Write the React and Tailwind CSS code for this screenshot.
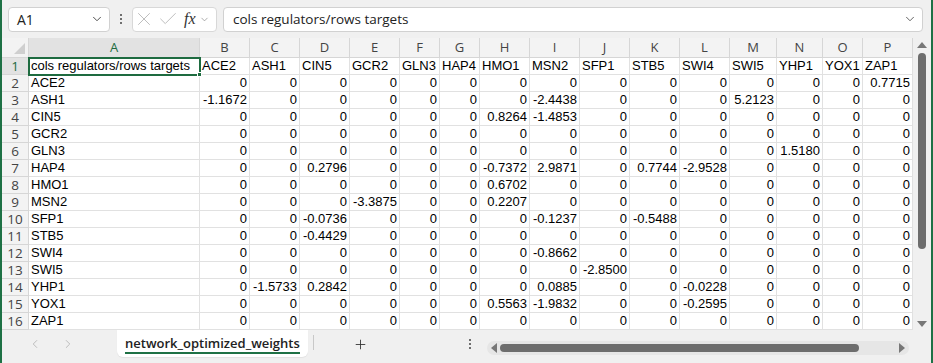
import { ChevronDown, ChevronLeft, ChevronRight, X, Check, Plus } from 'lucide-react'

const cols = [
  { l: 'A', w: 171 },
  { l: 'B', w: 50 },
  { l: 'C', w: 50 },
  { l: 'D', w: 50 },
  { l: 'E', w: 50 },
  { l: 'F', w: 40 },
  { l: 'G', w: 40 },
  { l: 'H', w: 50 },
  { l: 'I', w: 50 },
  { l: 'J', w: 50 },
  { l: 'K', w: 50 },
  { l: 'L', w: 50 },
  { l: 'M', w: 47 },
  { l: 'N', w: 46 },
  { l: 'O', w: 40 },
  { l: 'P', w: 50 },
]

const genes = ['ACE2', 'ASH1', 'CIN5', 'GCR2', 'GLN3', 'HAP4', 'HMO1', 'MSN2', 'SFP1', 'STB5', 'SWI4', 'SWI5', 'YHP1', 'YOX1', 'ZAP1']

// non-zero weights, keyed by row gene then column letter
const weights = {
  ACE2: { P: '0.7715' },
  ASH1: { B: '-1.1672', I: '-2.4438', M: '5.2123' },
  CIN5: { H: '0.8264', I: '-1.4853' },
  GLN3: { N: '1.5180' },
  HAP4: { D: '0.2796', H: '-0.7372', I: '2.9871', K: '0.7744', L: '-2.9528' },
  HMO1: { H: '0.6702' },
  MSN2: { E: '-3.3875', H: '0.2207' },
  SFP1: { D: '-0.0736', I: '-0.1237', K: '-0.5488' },
  STB5: { D: '-0.4429' },
  SWI4: { I: '-0.8662' },
  SWI5: { J: '-2.8500' },
  YHP1: { C: '-1.5733', D: '0.2842', I: '0.0885', L: '-0.0228' },
  YOX1: { H: '0.5563', I: '-1.9832', L: '-0.2595' },
}

const ui = { fontFamily: '"Open Sans", "Noto Sans", sans-serif' }
const cell = { fontFamily: '"Liberation Sans", Arial, sans-serif' }

function Toolbar() {
  return (
    <div className="flex items-center h-[38px] pl-[6px] pr-[8px] gap-[6px]" style={ui}>
      <div className="flex items-center justify-between w-[102px] h-[25px] bg-white border border-[#d1d1d1] rounded-[4px] pl-[8px] pr-[5px] text-[14px] text-[#222]">
        <span>A1</span>
        <ChevronDown size={14} strokeWidth={1.6} className="text-[#444]" />
      </div>
      <div className="flex flex-col gap-[2px] px-[4px]">
        <span className="w-[2px] h-[2px] bg-[#444] rounded-full" />
        <span className="w-[2px] h-[2px] bg-[#444] rounded-full" />
        <span className="w-[2px] h-[2px] bg-[#444] rounded-full" />
      </div>
      <div className="flex items-center w-[85px] h-[25px] bg-white border border-[#d8d8d8] rounded-[4px] text-[#b8b8b8]">
        <X size={22} strokeWidth={1} />
        <Check size={22} strokeWidth={1} className="ml-[2px]" />
        <span className="ml-[5px] text-[#333] italic text-[16px] leading-none" style={{ fontFamily: '"Liberation Serif", serif' }}>fx</span>
        <ChevronDown size={11} strokeWidth={1.5} className="text-[#888] ml-[3px]" />
      </div>
      <div className="flex-1 flex items-center justify-between h-[25px] bg-white border border-[#d1d1d1] rounded-[4px] pl-[9px] pr-[5px] text-[13.5px] text-[#222]">
        <span>cols regulators/rows targets</span>
        <ChevronDown size={14} strokeWidth={1.4} className="text-[#444]" />
      </div>
    </div>
  )
}

function HeaderRow() {
  return (
    <div className="flex h-[20px] bg-[#f3f3f3] text-[13px] text-[#444]" style={ui}>
      <div className="relative w-[27px] shrink-0 border-r border-b border-[#d6d6d6]">
        <div className="absolute right-[3px] bottom-[3px] w-0 h-0 border-l-[11px] border-l-transparent border-b-[11px] border-b-[#cfcfcf]" />
      </div>
      {cols.map((c) => (
        <div
          key={c.l}
          className={`shrink-0 flex items-center justify-center border-r border-b border-[#d6d6d6] ${c.l === 'A' ? 'bg-[#e2e2e2] text-[#1e6b40]' : ''}`}
          style={{ width: c.w }}
        >
          {c.l}
        </div>
      ))}
    </div>
  )
}

function Row({ n, children, selected }) {
  return (
    <div className="flex h-[17px]">
      <div
        className={`w-[27px] shrink-0 flex items-center justify-center border-r border-b border-[#d6d6d6] text-[13.5px] ${selected ? 'bg-[#e2e2e2] text-[#1e6b40]' : 'bg-[#f3f3f3] text-[#444]'}`}
        style={ui}
      >
        {n}
      </div>
      {children}
    </div>
  )
}

function Grid() {
  return (
    <div className="flex-1 bg-white overflow-hidden">
      <HeaderRow />
      <Row n={1} selected>
        {cols.map((c, i) => (
          <div
            key={c.l}
            className={`relative shrink-0 flex items-center px-[2px] border-r border-b border-[#e1e1e1] text-[13px] text-black whitespace-nowrap ${i === 0 ? 'outline-2 outline-[#1e6b40] -outline-offset-1 z-10' : ''}`}
            style={{ width: c.w, ...cell }}
          >
            {i === 0 ? 'cols regulators/rows targets' : genes[i - 1]}
            {i === 0 && <span className="absolute -right-[3px] -bottom-[3px] w-[5px] h-[5px] bg-[#1e6b40] border border-white" />}
          </div>
        ))}
      </Row>
      {genes.map((g, r) => (
        <Row key={g} n={r + 2}>
          {cols.map((c, i) => (
            <div
              key={c.l}
              className={`shrink-0 flex items-center px-[2px] border-r border-b border-[#e1e1e1] text-[13px] text-black whitespace-nowrap ${i === 0 ? 'justify-start' : 'justify-end'}`}
              style={{ width: c.w, ...cell }}
            >
              {i === 0 ? g : (weights[g] && weights[g][c.l]) || '0'}
            </div>
          ))}
        </Row>
      ))}
    </div>
  )
}

function VScroll() {
  return (
    <div className="w-[18px] shrink-0 flex flex-col items-center bg-[#f0f0f0] pt-[4px] pb-[3px]">
      <div className="w-0 h-0 border-l-[5px] border-l-transparent border-r-[5px] border-r-transparent border-b-[6px] border-b-[#777]" />
      <div className="w-[8px] h-[196px] mt-[5px] bg-[#6d6d6d] rounded-full" />
      <div className="flex-1" />
      <div className="w-0 h-0 border-l-[5px] border-l-transparent border-r-[5px] border-r-transparent border-t-[6px] border-t-[#777]" />
    </div>
  )
}

function SheetBar() {
  return (
    <div className="flex items-start h-[33px] bg-[#f0f0f0]" style={ui}>
      <div className="flex items-center gap-[19px] pl-[26px] h-[28px] text-[#b5b5b5]">
        <ChevronLeft size={14} strokeWidth={1.5} />
        <ChevronRight size={14} strokeWidth={1.5} />
      </div>
      <div className="ml-[42px] h-[27px] px-[8px] bg-white rounded-b-[6px] flex flex-col items-center justify-center shadow-[0_1px_1px_rgba(0,0,0,0.06)]">
        <span className="text-[13px] font-semibold text-[#222] leading-[18px] border-b-2 border-[#1e7145]">network_optimized_weights</span>
      </div>
      <div className="ml-[5px] mt-[5px] w-px h-[15px] bg-[#c8c8c8]" />
      <div className="ml-[39px] h-[28px] flex items-center text-[#333]">
        <Plus size={15} strokeWidth={1.4} />
      </div>
      <div className="ml-[101px] h-[28px] flex flex-col justify-center gap-[2px]">
        <span className="w-[2px] h-[2px] bg-[#444] rounded-full" />
        <span className="w-[2px] h-[2px] bg-[#444] rounded-full" />
        <span className="w-[2px] h-[2px] bg-[#444] rounded-full" />
      </div>
      <div className="ml-[16px] mt-[11px] w-[422px] h-[14px] bg-[#e6e6e6] rounded-full flex items-center px-[4px]">
        <div className="w-0 h-0 border-t-[5px] border-t-transparent border-b-[5px] border-b-transparent border-r-[6px] border-r-[#777]" />
        <div className="ml-[3px] w-[359px] h-[8px] bg-[#6d6d6d] rounded-full" />
        <div className="flex-1" />
        <div className="w-0 h-0 border-t-[5px] border-t-transparent border-b-[5px] border-b-transparent border-l-[6px] border-l-[#777]" />
      </div>
    </div>
  )
}

export default function App() {
  return (
    <div className="w-[933px] h-[363px] bg-[#f0f0f0] border-l-2 border-r-2 border-[#1e7145] flex flex-col overflow-hidden">
      <Toolbar />
      <div className="flex h-[292px]">
        <Grid />
        <VScroll />
      </div>
      <SheetBar />
    </div>
  )
}
